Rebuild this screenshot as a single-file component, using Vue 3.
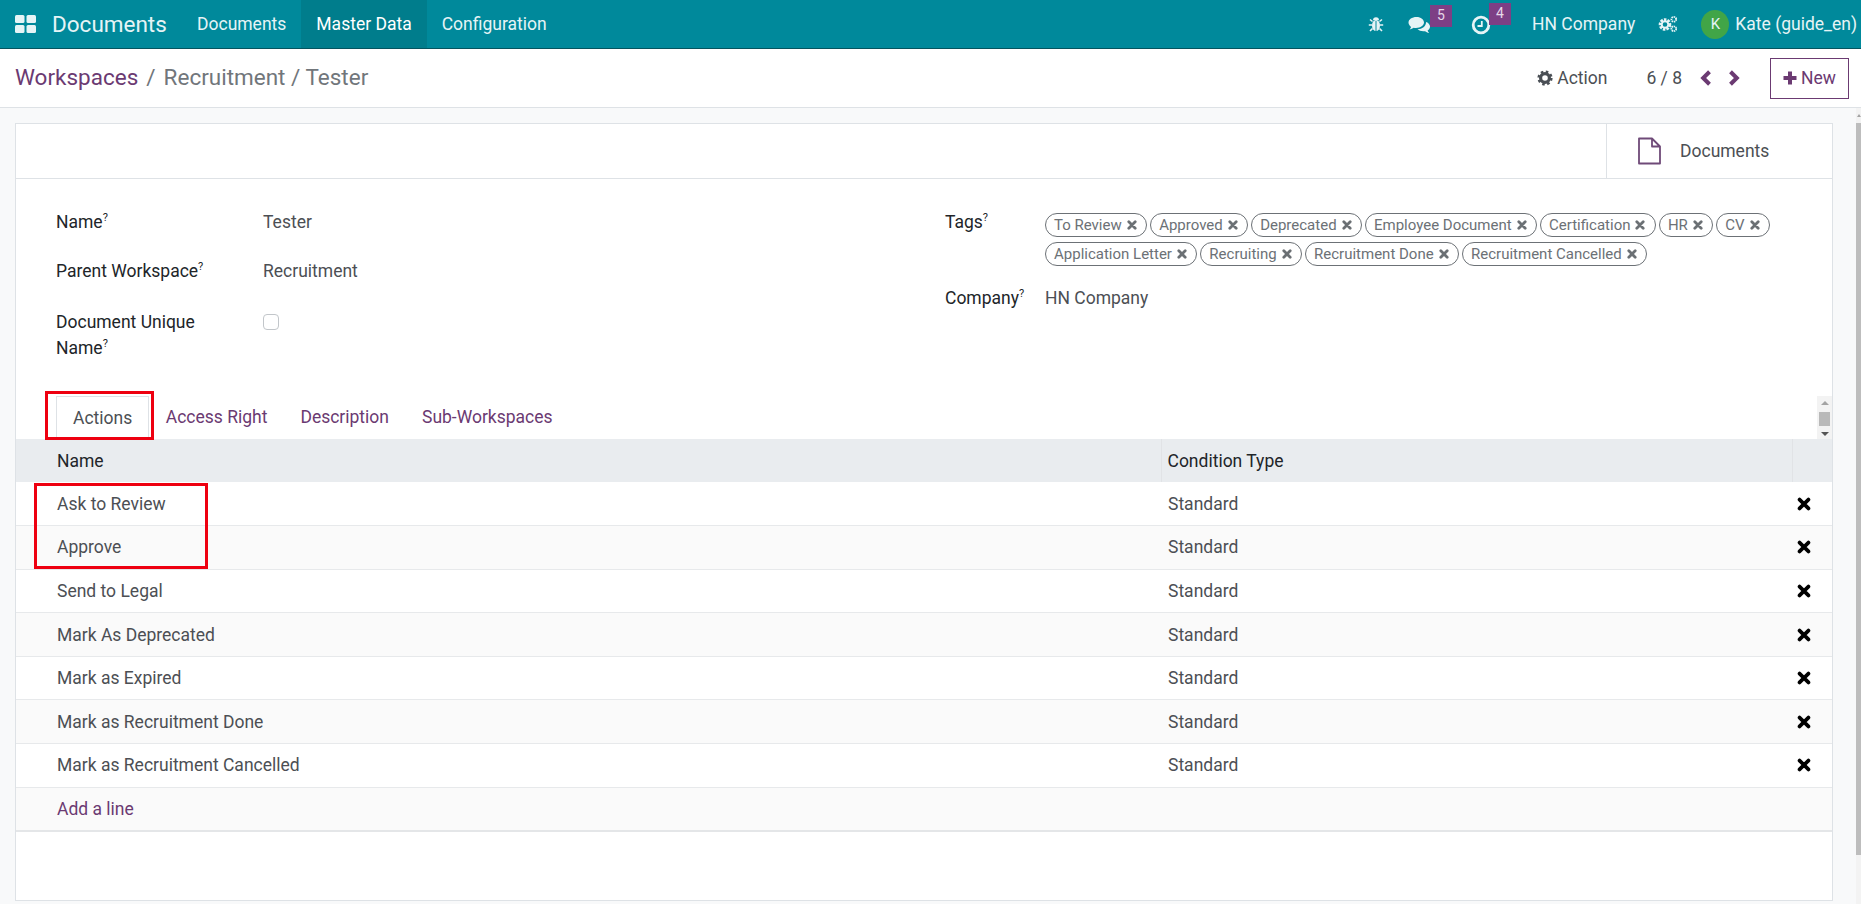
<template>
  <div class="page">
    <header class="navbar">
      <svg class="apps" viewBox="0 0 21 18"><rect x="0" y="0" width="9.5" height="8" rx="1.5"/><rect x="11.5" y="0" width="9.5" height="8" rx="1.5"/><rect x="0" y="10" width="9.5" height="8" rx="1.5"/><rect x="11.5" y="10" width="9.5" height="8" rx="1.5"/></svg>
      <span class="brand">Documents</span>
      <nav class="menu">
        <a v-for="m in menus" :key="m" class="menu-item" :class="{ on: m === 'Master Data' }">{{ m }}</a>
      </nav>
      <div class="systray">
        <svg class="tray-bug" viewBox="0 0 16 16" fill="#e6f4f6"><ellipse cx="8" cy="9.5" rx="4" ry="5.5"/><path d="M5 4.2a3 3 0 0 1 6 0z"/><path d="M4.5 5.5 2 3.5M11.5 5.5 14 3.5M4 9H.8M12 9h3.2M4.5 12.5 2 15M11.5 12.5 14 15" stroke="#e6f4f6" stroke-width="1.6" fill="none"/><path d="M8 5v10" stroke="#00899b" stroke-width="1"/></svg>
        <div class="tray-msg">
          <svg viewBox="0 0 23 19" class="tray-chat"><path d="M8.5 1C4 1 .5 3.4.5 6.6c0 1.7 1 3.2 2.6 4.3-.3.9-.8 1.7-1.5 2.5 1.6-.2 3-.8 4.100-1.600.7.1 1.500.2 2.300.2 4.500 0 8-2.500 8-5.400S13 1 8.500 1z" fill="#e6f4f6"/><path d="M18 6.500c0 3.700-3.700 6.500-8.500 6.800 1.400 1.300 3.500 2 5.800 2 .6 0 1.200 0 1.800-.1 1 .8 2.300 1.500 4 1.700-.7-.7-1.200-1.500-1.500-2.400 1.500-1 2.400-2.400 2.400-4 0-2-1.500-3.700-3.700-4.600-.1.200-.3.400-.3.600z" fill="#e6f4f6"/></svg>
          <span class="badge">5</span>
        </div>
        <div class="tray-clock">
          <svg viewBox="0 0 20 20" class="tray-clk"><circle cx="10" cy="10" r="7.800" fill="none" stroke="#e6f4f6" stroke-width="2.800"/><path d="M10.800 6v5H6.500" fill="none" stroke="#e6f4f6" stroke-width="1.800"/></svg>
          <span class="badge">4</span>
        </div>
        <span class="company">HN Company</span>
        <svg viewBox="0 0 20 16" class="tray-cogs"><circle cx="7" cy="8.500" r="4.800" fill="none" stroke="#e6f4f6" stroke-width="3" stroke-dasharray="2.400 1.100"/><circle cx="7" cy="8.500" r="3.300" fill="none" stroke="#e6f4f6" stroke-width="2"/><circle cx="15.800" cy="3.300" r="2.400" fill="none" stroke="#e6f4f6" stroke-width="1.800" stroke-dasharray="1.400 .6"/><circle cx="15.800" cy="12.700" r="2.400" fill="none" stroke="#e6f4f6" stroke-width="1.800" stroke-dasharray="1.400 .6"/></svg>
        <span class="avatar">K</span>
        <span class="user">Kate (guide_en)</span>
      </div>
    </header>

    <div class="control-panel">
      <div class="crumbs">
        <a class="crumb-link">Workspaces</a>
        <span class="crumb-sep">/</span>
        <span class="crumb-rest">Recruitment / Tester</span>
      </div>
      <div class="cp-right">
        <svg viewBox="0 0 16 16" class="gear"><circle cx="8" cy="8" r="4.400" fill="none" stroke="#4a4f55" stroke-width="3.200"/><circle cx="8" cy="8" r="6.300" fill="none" stroke="#4a4f55" stroke-width="2.600" stroke-dasharray="2.500 2.450"/></svg>
        <span class="action">Action</span>
        <span class="pager">6 / 8</span>
        <svg viewBox="0 0 12 16" class="chev"><path d="M9.500 1.800 3.200 8l6.300 6.200" fill="none" stroke="#6b3a72" stroke-width="4"/></svg>
        <svg viewBox="0 0 12 16" class="chev next"><path d="M2.500 1.800 8.800 8l-6.300 6.200" fill="none" stroke="#6b3a72" stroke-width="4"/></svg>
        <button class="new-btn">
          <svg viewBox="0 0 14 14" class="plus"><path d="M7 .5v13M.5 7h13" stroke="#6b3a72" stroke-width="4" fill="none"/></svg>
          New
        </button>
      </div>
    </div>

    <main class="content">
      <section class="sheet">
        <div class="button-box">
          <div class="stat-btn">
            <svg viewBox="0 0 24 28" class="file"><path d="M1.500 1.500h13l8 8v17h-21zM14.500 1.500v8h8" fill="none" stroke="#6f4a78" stroke-width="1.800" stroke-linejoin="round"/></svg>
            <span>Documents</span>
          </div>
        </div>

        <div class="form-group">
          <div class="form-col">
            <div class="field">
              <label class="label">Name<sup>?</sup></label>
              <span class="value">Tester</span>
            </div>
            <div class="field">
              <label class="label">Parent Workspace<sup>?</sup></label>
              <span class="value">Recruitment</span>
            </div>
            <div class="field">
              <label class="label">Document Unique Name<sup>?</sup></label>
              <span class="check"></span>
            </div>
          </div>
          <div class="form-col right">
            <div class="field tags-field">
              <label class="label">Tags<sup>?</sup></label>
              <div class="tags">
                <span v-for="t in tags" :key="t" class="tag">{{ t }}<svg viewBox="0 0 10 10" class="tag-x"><path d="M1.800 1.800l6.400 6.400M8.200 1.800 1.800 8.200" stroke="#6b7074" stroke-width="2.800" stroke-linecap="round"/></svg></span>
              </div>
            </div>
            <div class="field">
              <label class="label">Company<sup>?</sup></label>
              <span class="value">HN Company</span>
            </div>
          </div>
        </div>

        <div class="tabs">
          <a v-for="t in tabs" :key="t" class="tab" :class="{ active: t === 'Actions' }">{{ t }}</a>
          <div class="tab-scroll">
            <i class="up"></i>
            <b></b>
            <i class="down"></i>
          </div>
        </div>

        <table class="lines">
          <colgroup>
            <col class="col-name" />
            <col />
            <col class="col-del" />
          </colgroup>
          <thead>
            <tr>
              <th>Name</th>
              <th>Condition Type</th>
              <th></th>
            </tr>
          </thead>
          <tbody>
            <tr v-for="r in rows" :key="r">
              <td>{{ r }}</td>
              <td>Standard</td>
              <td class="del">
                <svg viewBox="0 0 12 12" class="del-x"><path d="M2.200 2.200l7.600 7.600M9.800 2.200l-7.600 7.600" stroke="#000" stroke-width="3.200" stroke-linecap="round"/></svg>
              </td>
            </tr>
            <tr>
              <td class="add"><a>Add a line</a></td>
              <td></td>
              <td></td>
            </tr>
          </tbody>
        </table>

        <div class="mark mark-tab"></div>
        <div class="mark mark-rows"></div>
      </section>
      <div class="page-scroll">
        <i></i>
        <b></b>
      </div>
    </main>
  </div>
</template>

<script setup>
const menus = ['Documents', 'Master Data', 'Configuration']
const tags = [
  'To Review', 'Approved', 'Deprecated', 'Employee Document', 'Certification', 'HR', 'CV',
  'Application Letter', 'Recruiting', 'Recruitment Done', 'Recruitment Cancelled'
]
const tabs = ['Actions', 'Access Right', 'Description', 'Sub-Workspaces']
const rows = [
  'Ask to Review', 'Approve', 'Send to Legal', 'Mark As Deprecated', 'Mark as Expired',
  'Mark as Recruitment Done', 'Mark as Recruitment Cancelled'
]
</script>

<style>
html, body { margin: 0; height: 904px; overflow: hidden; background: #f8f9fa; }
</style>

<style scoped>
.page {
  width: 1861px;
  height: 904px;
  display: flex;
  flex-direction: column;
  font-family: Roboto, "Liberation Sans", sans-serif;
  font-size: 17.5px;
  line-height: 26px;
  color: #4c4f54;
  overflow: hidden;
}

/* top bar */
.navbar {
  height: 48px;
  flex-shrink: 0;
  background: #00899b;
  border-bottom: 1px solid #04545f;
  display: flex;
  align-items: center;
  color: #e6f4f6;
}
.apps { width: 21px; height: 18px; margin-left: 15px; fill: #e6f4f6; }
.brand { font-size: 22.5px; margin-left: 16px; width: 130px; }
.menu { display: flex; height: 100%; }
.menu-item { padding: 0 15px; display: flex; align-items: center; }
.menu-item.on { background: #007d8c; color: #fff; }

.systray { margin-left: auto; display: flex; align-items: center; height: 100%; }
.tray-bug { width: 16px; height: 16px; }
.tray-msg, .tray-clock { position: relative; display: flex; }
.tray-msg { margin-left: 24px; }
.tray-clock { margin-left: 40px; }
.tray-chat { width: 23px; height: 19px; margin-top: 2px; }
.tray-clk { width: 20px; height: 20px; margin-top: 2px; }
.badge {
  position: absolute;
  top: -9px;
  left: 22px;
  width: 22px;
  height: 22px;
  background: #7d3f85;
  color: #e6d8e8;
  font-size: 14px;
  line-height: 20px;
  text-align: center;
}
.tray-clock .badge { left: 18px; top: -10px; }
.company { margin-left: 41px; }
.tray-cogs { width: 20px; height: 16px; margin-left: 23px; }
.avatar {
  width: 28px;
  height: 29px;
  border-radius: 50%;
  background: #41a547;
  margin-left: 23px;
  font-size: 15px;
  line-height: 29px;
  text-align: center;
}
.user { margin-left: 6px; margin-right: 4px; white-space: nowrap; }

/* control panel */
.control-panel {
  height: 58px;
  flex-shrink: 0;
  background: #fff;
  border-bottom: 1px solid #dee2e6;
  display: flex;
  align-items: center;
  padding: 0 12px 0 15px;
}
.crumbs { font-size: 22.5px; display: flex; align-items: center; gap: 8px; margin-top: -2px; }
.crumb-link { color: #6b3a72; }
.crumb-sep, .crumb-rest { color: #71767b; }
.cp-right { margin-left: auto; display: flex; align-items: center; }
.gear { width: 16px; height: 16px; }
.action { margin-left: 4px; }
.pager { margin-left: 39px; }
.chev { width: 12px; height: 16px; margin-left: 18px; }
.chev.next { margin-left: 16px; }
.new-btn {
  width: 79px;
  height: 41px;
  margin-left: 30px;
  padding: 0;
  background: #fff;
  border: 1px solid #6b3a72;
  color: #6b3a72;
  font: inherit;
  display: flex;
  align-items: center;
  justify-content: center;
  gap: 4px;
}
.plus { width: 14px; height: 14px; }

/* sheet */
.content { flex: 1; display: flex; min-height: 0; padding: 15px 0 0 15px; }
.sheet {
  position: relative;
  width: 1818px;
  height: 778px;
  flex-shrink: 0;
  box-sizing: border-box;
  background: #fff;
  border: 1px solid #dee2e6;
}
.button-box {
  height: 54px;
  border-bottom: 1px solid #dee2e6;
  display: flex;
  justify-content: flex-end;
}
.stat-btn {
  width: 226px;
  border-left: 1px solid #dee2e6;
  display: flex;
  align-items: center;
  box-sizing: border-box;
  padding-left: 30px;
  gap: 18px;
}
.file { width: 25px; height: 28px; }

.form-group { display: flex; padding: 30px 0 0 40px; height: 218px; box-sizing: border-box; }
.form-col { width: 889px; flex-shrink: 0; }
.form-col.right { width: 860px; }
.field { display: flex; margin-bottom: 24px; }
.field:first-child { margin-bottom: 23px; }
.field:nth-child(2) { margin-bottom: 25px; }
.label { width: 207px; flex-shrink: 0; color: #212529; padding-right: 40px; box-sizing: border-box; }
.right .label { width: 100px; padding-right: 0; }
sup { font-size: 11px; line-height: 0; color: #212529; }
.value { color: #4c4f54; }
.check {
  width: 16px;
  height: 16px;
  margin-top: 5px;
  box-sizing: border-box;
  border: 1px solid #c2c6ca;
  border-radius: 4px;
}

.field.tags-field { margin-bottom: 19px; }
.tags { display: flex; flex-wrap: wrap; gap: 5px 3px; margin-top: 4px; width: 740px; }
.tag {
  height: 24px;
  box-sizing: border-box;
  padding: 0 9.400px 0 8px;
  border: 1px solid #6c7176;
  border-radius: 12px;
  font-size: 15px;
  line-height: 22px;
  color: #6c7176;
  display: flex;
  align-items: center;
  gap: 5px;
}
.tag-x { width: 10px; height: 10px; }

/* tabs */
.tabs {
  height: 43px;
  position: relative;
  display: flex;
  padding-left: 40px;
  margin-top: -1px;
}
.tab { padding: 0 16.500px; line-height: 43px; color: #6b3a72; }
.tab.active {
  color: #4c4f54;
  background: #fff;
  border: 1px solid #dee2e6;
  border-bottom: 0;
  box-sizing: border-box;
  height: 43px;
  padding: 0 16px;
}
.tab-scroll {
  position: absolute;
  right: 0;
  top: 0;
  width: 15px;
  height: 43px;
  background: #f3f3f3;
  display: flex;
  flex-direction: column;
  align-items: center;
  justify-content: space-between;
  padding: 5px 0 3px;
  box-sizing: border-box;
}
.tab-scroll b { width: 11px; height: 14px; background: #b9b9b9; }
.up, .down { width: 0; height: 0; border-left: 4px solid transparent; border-right: 4px solid transparent; }
.up { border-bottom: 4px solid #a3a3a3; }
.down { border-top: 4px solid #555; }

/* lines table */
.lines { width: 100%; border-collapse: collapse; table-layout: fixed; border-bottom: 2px solid #e4e6e8; }
.col-name { width: 1145px; }
.col-del { width: 40px; }
.lines th {
  height: 43px;
  background: #e9ecef;
  text-align: left;
  font-weight: 400;
  color: #212529;
  padding: 0 0 0 6px;
  border-left: 1px solid #e1e3e6;
}
.lines th:first-child { padding-left: 41px; border-left: 0; }
.lines td {
  height: 43.600px;
  box-sizing: border-box;
  padding: 0 0 0 7px;
  border-bottom: 1px solid #e7e9eb;
  color: #4c4f54;
}
.lines td:first-child { padding-left: 41px; }
.lines tbody tr:nth-child(even) td { background: #fafafa; }
.lines tbody tr:last-child td { border-bottom: 0; }
.add a { color: #6b3a72; }
.lines td.del { padding: 0 0 0 5px; }
.del-x { width: 14px; height: 14px; display: block; }

/* red annotation rectangles */
.mark { position: absolute; border: 3px solid #ee0010; box-sizing: border-box; pointer-events: none; }
.mark-tab { left: 29px; top: 267px; width: 109px; height: 49px; }
.mark-rows { left: 18px; top: 359px; width: 174px; height: 86px; }

/* page scrollbar */
.page-scroll {
  width: 5px;
  margin-top: -15px;
  margin-left: 23px;
  background: #f3f3f3;
  display: flex;
  flex-direction: column;
  align-items: center;
  flex: 1;
}
.page-scroll i { margin-top: 6px; width: 0; height: 0; border-left: 2px solid transparent; border-right: 2px solid transparent; border-bottom: 3px solid #a3a3a3; }
.page-scroll b { margin-top: 6px; width: 5px; height: 732px; background: #bdbdbd; }
</style>
